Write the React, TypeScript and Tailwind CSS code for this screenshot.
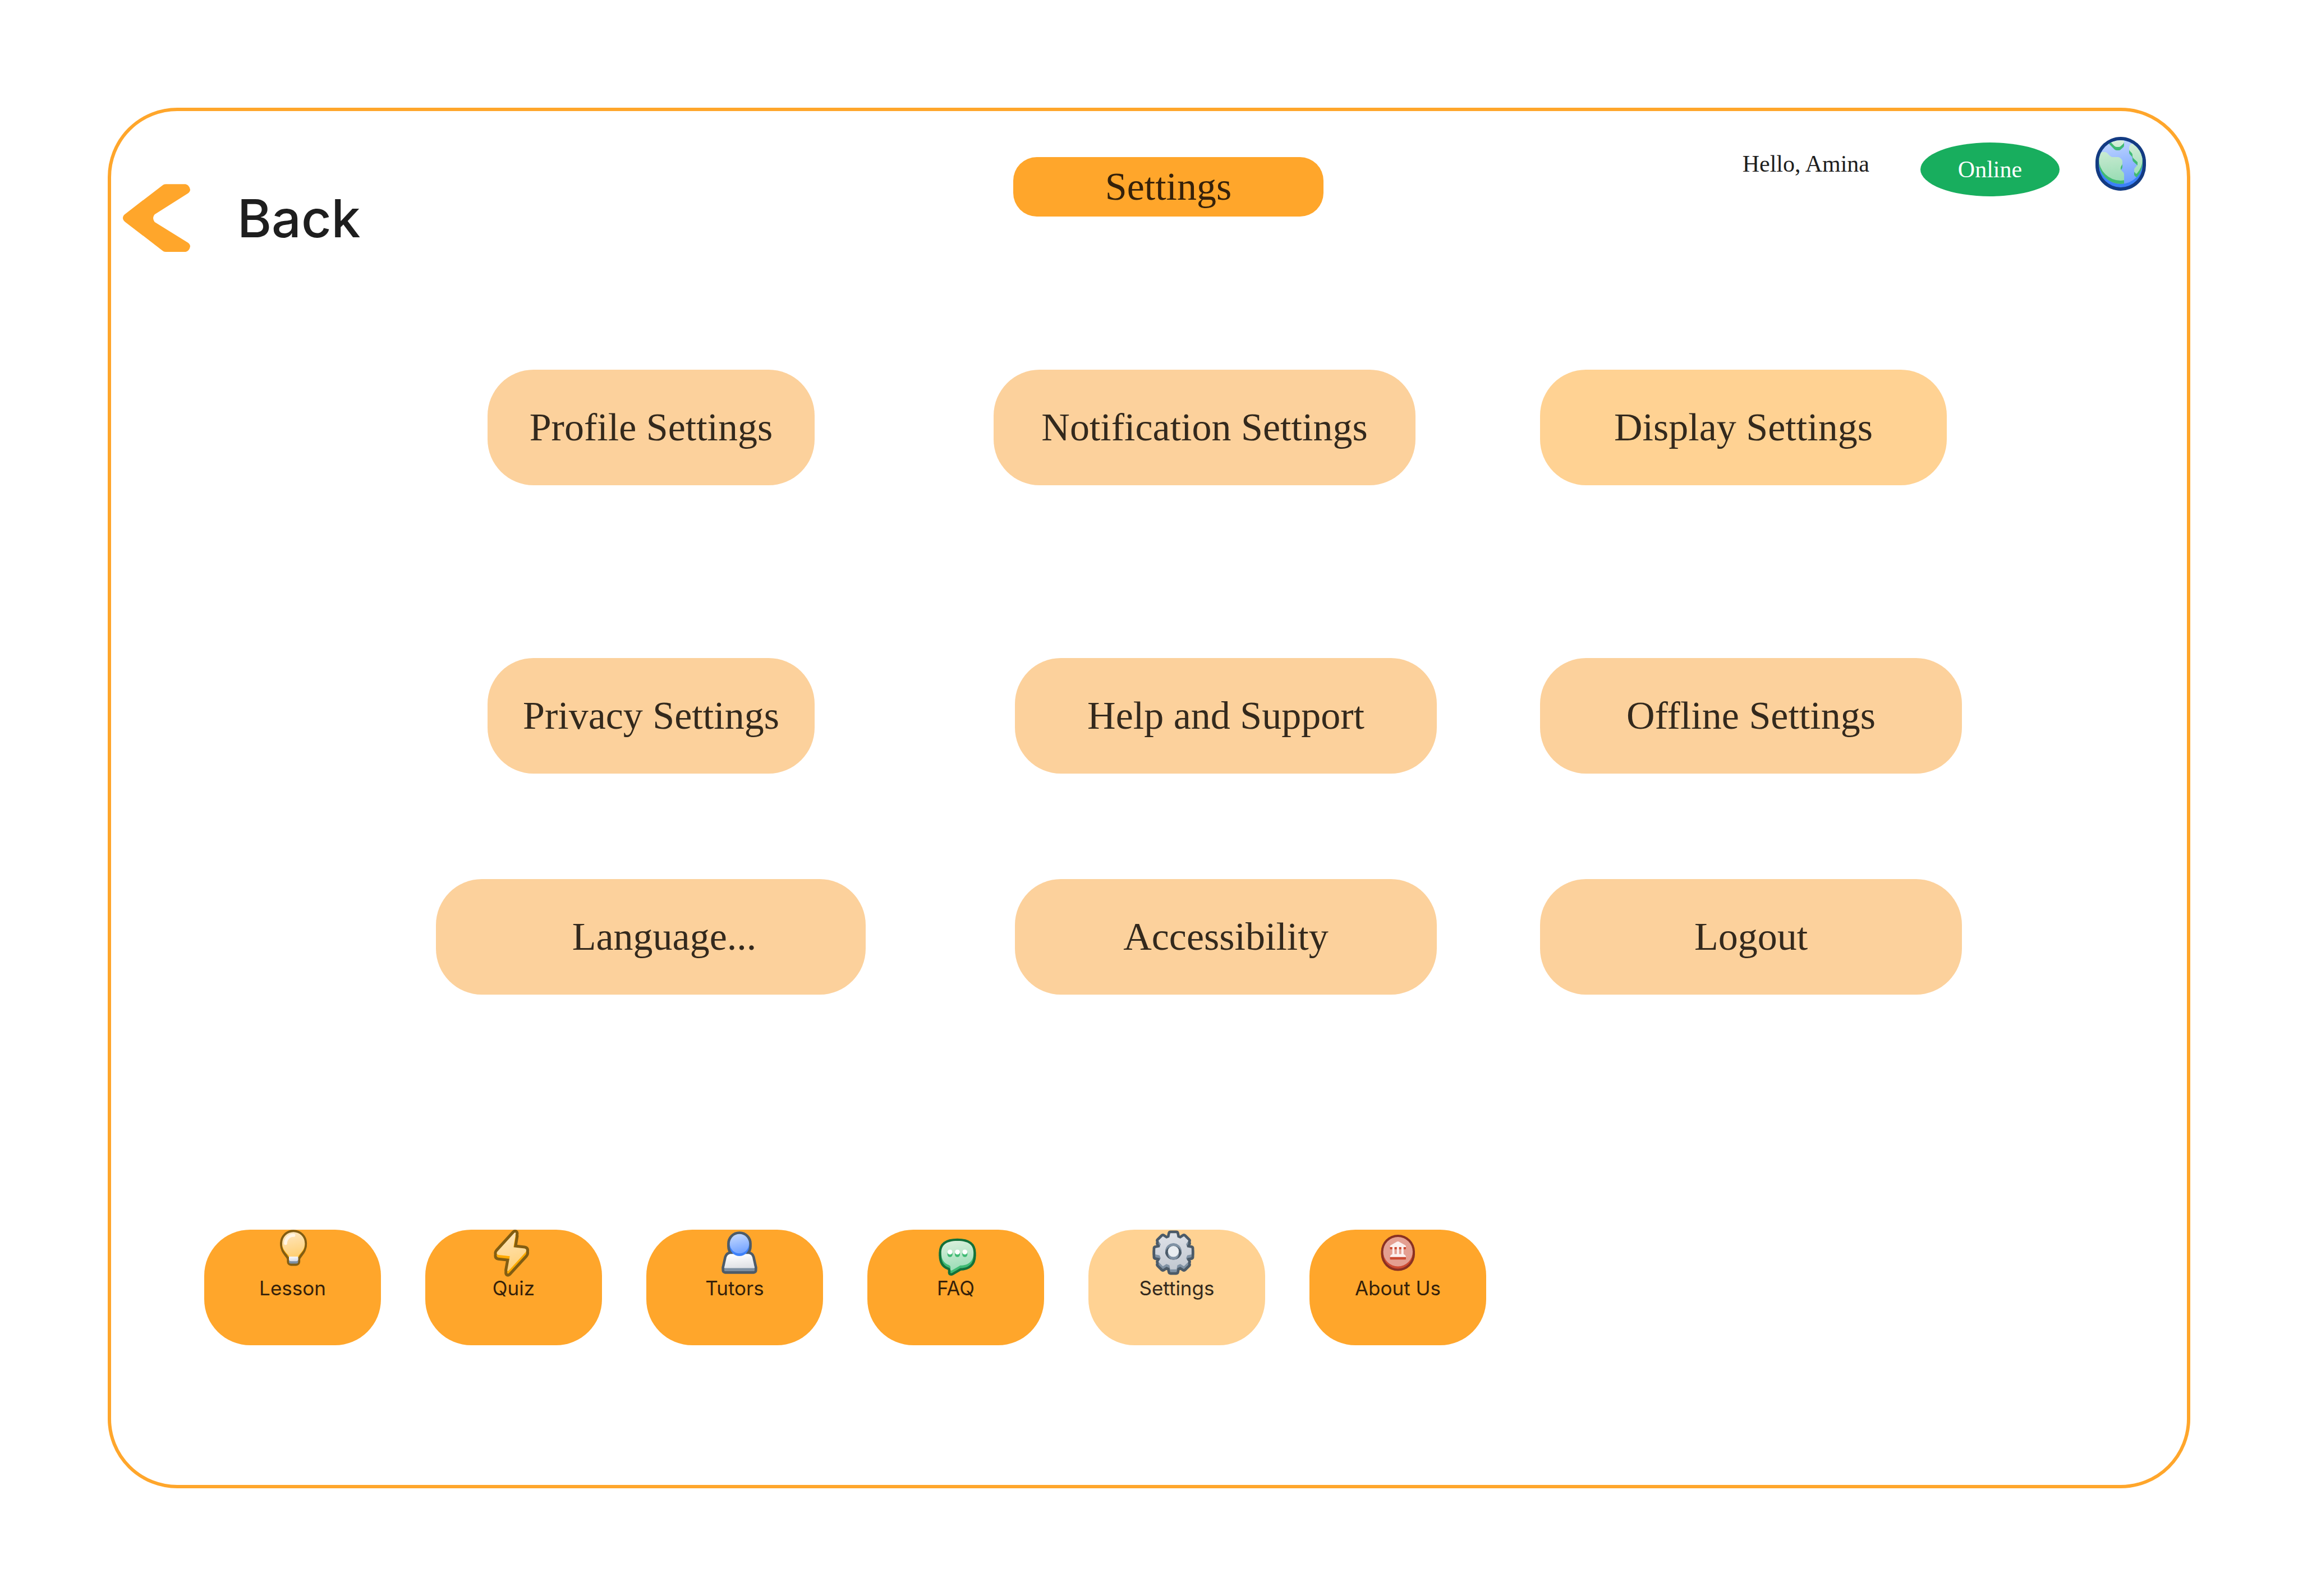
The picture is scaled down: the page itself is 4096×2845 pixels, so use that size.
import type { ReactNode } from "react";

const serif = "font-['Liberation_Serif',serif]";

const gearPoints = Array.from({ length: 8 }, (_, i) => {
  const a = (i * Math.PI) / 4;
  return [
    [-26, -97],
    [-20, -126],
    [20, -126],
    [26, -97],
  ]
    .map(([x, y]) => {
      const px = 213 + x * Math.cos(a) - y * Math.sin(a);
      const py = 232 + x * Math.sin(a) + y * Math.cos(a);
      return `${px.toFixed(1)},${py.toFixed(1)}`;
    })
    .join(" ");
}).join(" ");

function Gradient({ id, from, to }: { id: string; from: string; to: string }) {
  return (
    <linearGradient id={id} x1="0.4" y1="0" x2="0.6" y2="1">
      <stop offset="0" stopColor={from} />
      <stop offset="1" stopColor={to} />
    </linearGradient>
  );
}

function NavIcon({ x, y, children }: { x: number; y: number; children: ReactNode }) {
  return (
    <svg viewBox={`${x} ${y} 384 336`} className="h-[84px] w-24 shrink-0" aria-hidden="true">
      {children}
    </svg>
  );
}

function BulbIcon() {
  const glass =
    "M144 175 a80.5 80.5 0 0 1 161 0 c0 38 -19 60 -38 80 q-9 9 -9 16 H192 q0 -8 -9 -16 C165 235 144 213 144 175 Z";
  return (
    <NavIcon x={28} y={78}>
      <defs>
        <Gradient id="bulb" from="#ffe6bd" to="#ffcf73" />
        <Gradient id="bulb-cap" from="#f8f8fb" to="#d6dae6" />
        <clipPath id="bulb-clip">
          <path d="M130 80 H320 V271 H130 Z" />
        </clipPath>
      </defs>
      <g fill="#825d12" stroke="#825d12" strokeWidth="31" strokeLinejoin="round">
        <path d={glass} />
        <path d="M144 175 C144 232 172 248 192 281 H258 C278 248 305 232 305 175 Z" />
        <rect x="193" y="262" width="64" height="58" rx="14" />
      </g>
      <g clipPath="url(#bulb-clip)">
        <path d="M144 175 V190 C146 236 186 250 190 284 H260 C264 250 303 236 305 190 V175 Z" fill="#ffaa00" />
      </g>
      <path d={glass} fill="url(#bulb)" />
      <rect x="192" y="271" width="66" height="49" rx="14" fill="#7d8fa3" />
      <path d="M192 270 H258 V290 Q256 303 244 303 H206 Q194 303 192 290 Z" fill="url(#bulb-cap)" />
      <path d="M168 175 A57 57 0 0 1 226 118" fill="none" stroke="#fff5e4" strokeWidth="23" strokeLinecap="round" />
    </NavIcon>
  );
}

function BoltIcon() {
  const bolt =
    "M236 101 Q240 97 244 99 Q247 101 246 106 L230 203 L308 212 Q321 214 321 226 Q321 233 315 240 L196 370 Q186 378 186 366 L204 267 L123 258 Q111 256 111 244 Q111 238 116 233 Z";
  return (
    <NavIcon x={41} y={78}>
      <defs>
        <Gradient id="bolt" from="#ffe5b9" to="#ffcf75" />
      </defs>
      <g fill="#825d12" stroke="#825d12" strokeWidth="41" strokeLinejoin="round">
        <path d={bolt} />
        <path d={bolt} transform="translate(0 19)" />
      </g>
      <g fill="#ffaa00">
        <path d={bolt} transform="translate(0 19)" />
        <path d="M111 244 H140 V265 H111 Z M300 226 H321 V245 H300 Z" />
        <path d="M186 366 V386 H196 V366 Z" />
      </g>
      <path d={bolt} fill="url(#bolt)" />
    </NavIcon>
  );
}

function TutorIcon() {
  const body =
    "M150 251 H282 Q302 254 308 275 L324 347 q0 5 -5 5 H113 q-5 0 -5 -5 L124 275 Q131 254 150 251 Z";
  return (
    <NavIcon x={-8} y={78}>
      <defs>
        <Gradient id="head" from="#c2d7ff" to="#70a1ff" />
        <Gradient id="torso" from="#ffffff" to="#dfe1e5" />
      </defs>
      <g fill="#4d5b68" stroke="#4d5b68" strokeWidth="37" strokeLinejoin="round">
        <circle cx="216" cy="178" r="69" />
        <circle cx="216" cy="197" r="69" />
        <path d={body} />
        <rect x="108" y="347" width="216" height="27" rx="6" />
      </g>
      <rect x="108" y="340" width="216" height="34" rx="6" fill="#7d8fa1" />
      <path d={body} fill="url(#torso)" />
      <circle cx="216" cy="197" r="69" fill="#3d81f9" />
      <path d="M147 178 H285 V197 H147 Z" fill="#3d81f9" />
      <circle cx="216" cy="178" r="69" fill="url(#head)" />
    </NavIcon>
  );
}

function ChatIcon() {
  const bubble =
    "M207 128 C290 128 322 158 322 213 C322 275 285 303 228 303 L170 337 Q158 343 157 334 L158 314 Q157 304 146 300 C112 288 92 262 92 213 C92 158 126 128 207 128 Z";
  return (
    <NavIcon x={5} y={48}>
      <defs>
        <Gradient id="chat" from="#d8efdb" to="#98dcb5" />
      </defs>
      <g fill="#13713a" stroke="#13713a" strokeWidth="35" strokeLinejoin="round">
        <path d={bubble} />
        <path d={bubble} transform="translate(0 19)" />
      </g>
      <path d={bubble} transform="translate(0 19)" fill="#3fba73" />
      <path d={bubble} fill="url(#chat)" />
      {[154, 207, 260].map((cx) => (
        <g key={cx}>
          <rect x={cx - 18} y="190" width="36" height="53" rx="18" fill="#3fba73" />
          <circle cx={cx} cy="207" r="18" fill="#ffffff" />
        </g>
      ))}
    </NavIcon>
  );
}

function GearIcon() {
  return (
    <NavIcon x={47} y={78}>
      <defs>
        <Gradient id="gear" from="#dee1e7" to="#c2c8d1" />
        <clipPath id="gear-hole">
          <circle cx="213" cy="233" r="59" />
        </clipPath>
      </defs>
      <g fill="#4b5a68" stroke="#4b5a68" strokeWidth="44" strokeLinejoin="round">
        <polygon points={gearPoints} />
        <polygon points={gearPoints} transform="translate(0 20)" />
      </g>
      <polygon points={gearPoints} transform="translate(0 20)" fill="#8092a4" stroke="#8092a4" strokeWidth="6" strokeLinejoin="round" />
      <polygon points={gearPoints} transform="translate(0 10)" fill="#8092a4" stroke="#8092a4" strokeWidth="6" strokeLinejoin="round" />
      <polygon points={gearPoints} fill="url(#gear)" stroke="url(#gear)" strokeWidth="6" strokeLinejoin="round" />
      <g clipPath="url(#gear-hole)">
        <circle cx="213" cy="233" r="59" fill="#8092a4" />
        <circle cx="213" cy="253" r="59" fill="#4b5a68" />
        <rect x="174" y="194" width="78" height="98" rx="39" fill="#8092a4" />
      </g>
      <circle cx="213" cy="233" r="39" fill="#e9edf1" />
    </NavIcon>
  );
}

function MuseumIcon() {
  return (
    <NavIcon x={28} y={78}>
      <circle cx="219" cy="235" r="121" fill="#8a3122" />
      <circle cx="219" cy="251" r="121" fill="#8a3122" />
      <circle cx="219" cy="251" r="105" fill="#cc4b33" />
      <circle cx="219" cy="235" r="105" fill="#e49f91" />
      <rect x="162" y="194" width="114" height="24" rx="5" fill="#cc4b33" />
      <rect x="162" y="262" width="114" height="29" rx="5" fill="#cc4b33" />
      <g fill="#fcf0ee">
        <path d="M162 202 V196 Q162 192 166 190 L213 163 Q219 160 225 163 L272 190 Q276 192 276 196 V202 Z" />
        <rect x="179" y="200" width="15" height="56" />
        <rect x="211" y="200" width="16" height="56" />
        <rect x="243" y="200" width="16" height="56" />
        <path d="M162 273 V268 Q163 261 171 258 Q174 252 181 252 H257 Q264 252 267 258 Q275 261 276 268 V273 Z" />
      </g>
    </NavIcon>
  );
}

function GlobeIcon() {
  const land = (
    <>
      <path d="M96 180 H150 Q160 180 168 188 L186 206 Q196 216 206 216 H244 Q254 216 262 224 L270 232 Q276 238 276 248 V262 Q276 272 268 280 Q262 290 264 302 Q266 308 272 314 L282 324 Q288 330 288 340 V400 H96 Z" />
      <path d="M170 86 L218 136 Q226 144 236 144 H250 Q258 144 264 138 L282 122 Q288 116 288 108 V86 Z" />
      <path d="M350 116 Q324 130 324 148 V160 Q324 170 332 176 L342 186 Q348 192 348 202 V210 Q348 218 356 226 L384 252 V272 L368 290 Q360 298 360 308 V320 L374 336 L430 330 V100 Z" />
    </>
  );
  return (
    <svg viewBox="84 72 360 384" className="h-24 w-[90px]" aria-hidden="true">
      <defs>
        <Gradient id="ocean" from="#c0d5ff" to="#6e9fff" />
        <linearGradient id="land" gradientUnits="userSpaceOnUse" x1="250" y1="96" x2="280" y2="384">
          <stop offset="0" stopColor="#d8efda" />
          <stop offset="1" stopColor="#98dcb4" />
        </linearGradient>
        <clipPath id="globe-a">
          <circle cx="264" cy="252" r="156" />
        </clipPath>
        <clipPath id="globe-b">
          <path d="M108 60 H420 V228 A156 156 0 0 1 108 228 Z" />
        </clipPath>
      </defs>
      <rect x="84" y="72" width="360" height="384" rx="180" fill="#133b82" />
      <rect x="108" y="96" width="312" height="336" rx="156" fill="#3b80f8" />
      <circle cx="264" cy="252" r="156" fill="url(#ocean)" />
      <g clipPath="url(#globe-a)">
        <g fill="#3fba73" transform="translate(0 24)">
          {land}
        </g>
        <g fill="url(#land)" clipPath="url(#globe-b)">
          {land}
        </g>
      </g>
    </svg>
  );
}

function BackArrow() {
  return (
    <svg viewBox="0 0 160 161" className="h-[121px] w-[120px] shrink-0" aria-hidden="true">
      <path
        fill="#ffa62b"
        d="M94 3 Q97 0 102 0 H149 Q158 2 160 13 Q160 18 154.500 22 L75.500 72 Q72 76 72 80.500 Q72 86 75.500 90 L154.500 139 Q160 143 160 148 Q158 159 149 161 H102 Q97 161 94 158 L5.500 90 Q0 86 0 80.500 Q0 75 5.500 71 Z"
      />
    </svg>
  );
}

const peach = "bg-[#fcd19c]";
const sand = "bg-[#ffd293]";

const rows = [
  {
    id: "general",
    className: "mt-[210px]",
    items: [
      { label: "Profile Settings", className: `ml-[92px] w-[583px] ${peach}` },
      { label: "Notification Settings", className: `w-[752px] ${peach}` },
      { label: "Display Settings", className: `w-[725px] ${sand}` },
    ],
  },
  {
    id: "support",
    className: "mt-[308px]",
    items: [
      { label: "Privacy Settings", className: `ml-[92px] w-[583px] ${peach}` },
      { label: "Help and Support", className: `ml-[38px] w-[752px] ${peach}` },
      { label: "Offline Settings", className: `w-[752px] ${peach}` },
    ],
  },
  {
    id: "account",
    className: "mt-[188px]",
    items: [
      { label: "Language...", className: `w-[766px] pl-12 ${peach}` },
      { label: "Accessibility", className: `ml-[38px] w-[752px] ${peach}` },
      { label: "Logout", className: `w-[752px] ${peach}` },
    ],
  },
];

const tabs = [
  { label: "Lesson", icon: <BulbIcon /> },
  { label: "Quiz", icon: <BoltIcon /> },
  { label: "Tutors", icon: <TutorIcon /> },
  { label: "FAQ", icon: <ChatIcon /> },
  { label: "Settings", icon: <GearIcon />, current: true },
  { label: "About Us", icon: <MuseumIcon /> },
];

export default function App() {
  return (
    <div className="flex min-h-screen bg-white p-48 font-['Inter',sans-serif] text-[#1e1e1e]">
      <main className="flex flex-1 flex-col rounded-[124px] border-[6px] border-[#ffa62b]">
        <header className="grid grid-cols-[1608fr_553fr_1539fr] items-start pt-[46px]">
          <a href="#back" className="mt-[84px] ml-[21px] flex items-center gap-[84px]">
            <BackArrow />
            <span className="text-[93px] leading-24 font-medium">Back</span>
          </a>
          <h1
            className={`mt-9 flex h-[106px] items-center justify-center rounded-[42px] bg-[#ffa62b] text-[70px] leading-20 text-[#35210a] ${serif}`}
          >
            Settings
          </h1>
          <div className={`flex items-start justify-end pr-[73px] text-[42px] leading-12 ${serif}`}>
            <p className="mt-6 mr-[91px]">Hello, Amina</p>
            <p className="mt-[10px] mr-16 flex h-24 w-[248px] items-center justify-center rounded-[50%] bg-[#18ae5e] text-white">
              Online
            </p>
            <button type="button" aria-label="World">
              <GlobeIcon />
            </button>
          </div>
        </header>

        {rows.map((row) => (
          <section key={row.id} className={`grid grid-cols-[579fr_994fr_974fr_1153fr] ${row.className}`}>
            <span aria-hidden="true" />
            {row.items.map((item) => (
              <button
                key={item.label}
                type="button"
                className={`h-[206px] rounded-[82px] text-[70px] leading-20 text-[#33291d] ${serif} ${item.className}`}
              >
                {item.label}
              </button>
            ))}
          </section>
        ))}

        <nav className="mt-[419px] flex gap-[79px] pl-[166px]">
          {tabs.map((tab) => (
            <a
              key={tab.label}
              href={`#${tab.label.toLowerCase().replace(" ", "-")}`}
              aria-current={tab.current ? "page" : undefined}
              className={`flex h-[206px] w-[315px] flex-col items-center rounded-[82px] text-[35px] leading-10 ${
                tab.current ? "bg-[#ffd293] text-[#33291d]" : "bg-[#ffa62b] text-[#35210a]"
              }`}
            >
              {tab.icon}
              <span>{tab.label}</span>
            </a>
          ))}
        </nav>
      </main>
    </div>
  );
}
